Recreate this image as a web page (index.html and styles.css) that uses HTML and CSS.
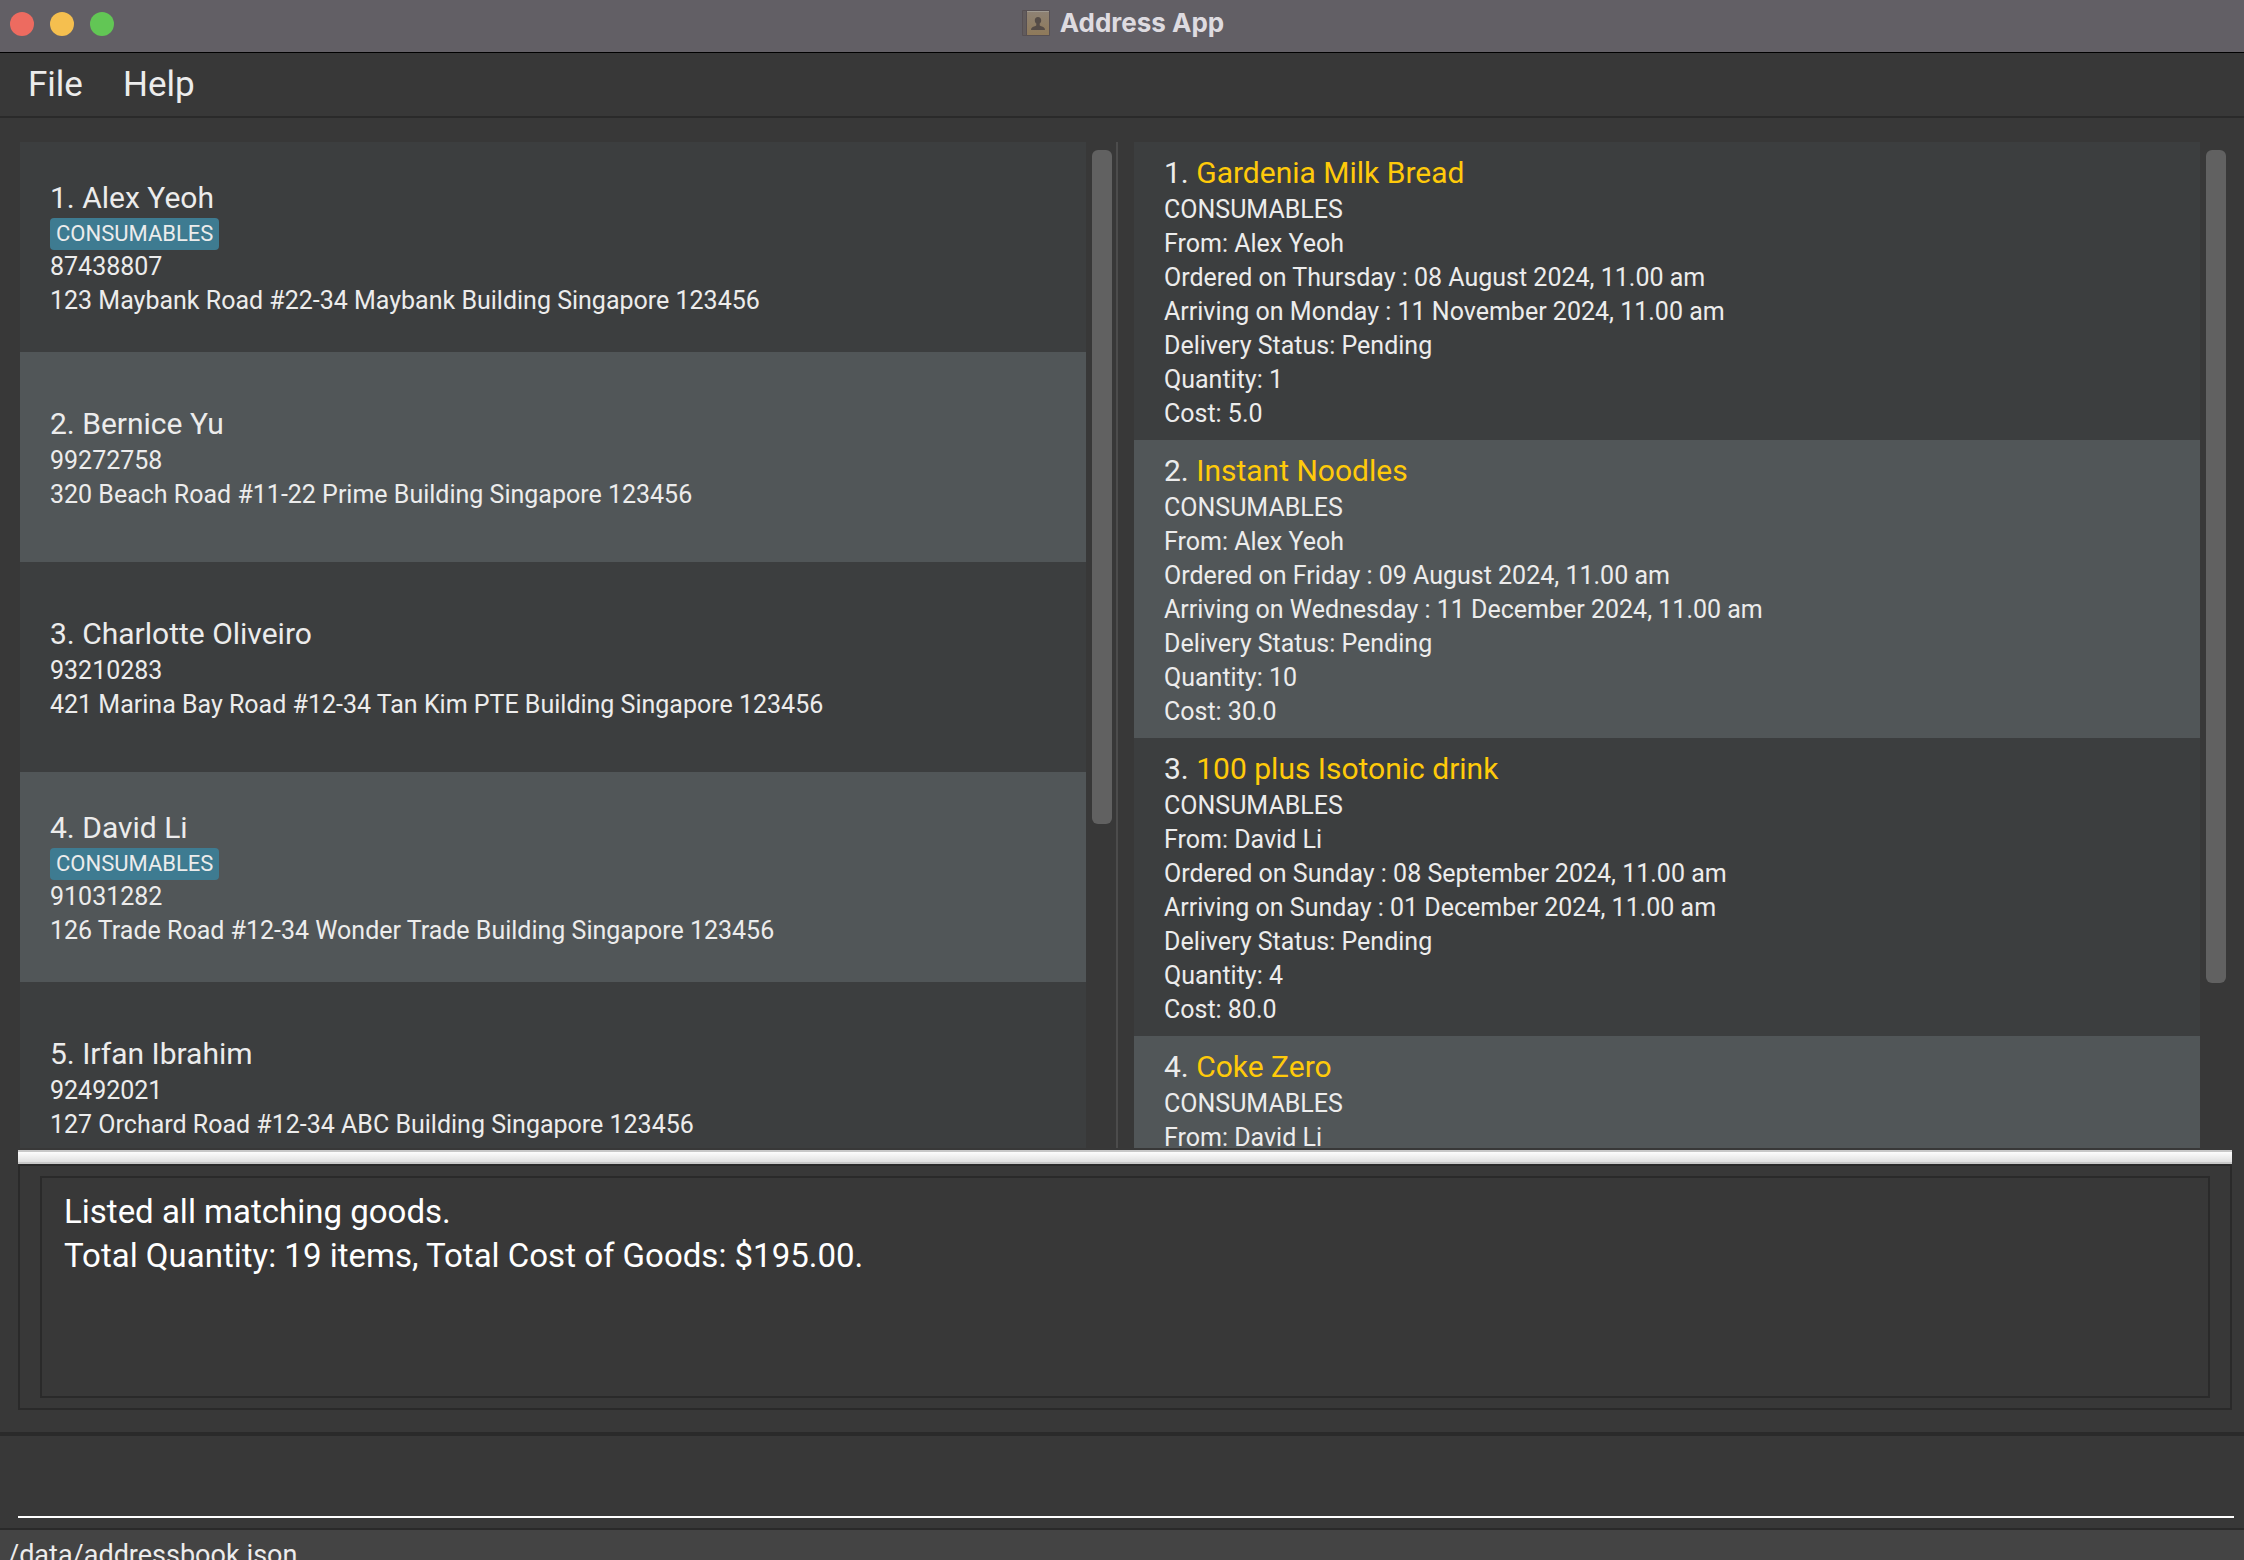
FILE: index.html
```html
<!DOCTYPE html>
<html lang="en">
<head>
<meta charset="utf-8">
<title>Address App</title>
<link rel="stylesheet" href="styles.css">
</head>
<body>
<div class="window">
  <header class="titlebar">
    <div class="traffic">
      <button class="dot dot-close" type="button" aria-label="Close"></button>
      <button class="dot dot-minimise" type="button" aria-label="Minimise"></button>
      <button class="dot dot-zoom" type="button" aria-label="Zoom"></button>
    </div>
    <h1 class="title">
      <svg class="title-icon" viewBox="0 0 28 26" width="28" height="26" aria-hidden="true">
        <defs>
          <linearGradient id="cover" x1="0" y1="0" x2="0" y2="1">
            <stop offset="0" stop-color="#8e8274"/>
            <stop offset="1" stop-color="#8f7a5a"/>
          </linearGradient>
        </defs>
        <rect x="0" y="0" width="28" height="26" rx="1" fill="#575053"/>
        <rect x="1" y="1" width="3" height="24" fill="#625c5d"/>
        <rect x="5" y="1" width="22" height="24" fill="url(#cover)"/>
        <rect x="5" y="1" width="22" height="1" fill="#a09a90"/>
        <path d="M16 7c-2 0-3.200 1.400-3.200 3.300 0 1.500.6 2.600 1.500 3.300v1.400c0 .6-.5.900-1.500 1.200-2.200.6-3.800 1.200-3.800 3.800h14c0-2.600-1.600-3.200-3.800-3.800-1-.3-1.500-.6-1.500-1.200v-1.400c.9-.7 1.500-1.800 1.500-3.300C19.200 8.400 18 7 16 7z" fill="#554c47"/>
      </svg>
      <span>Address App</span>
    </h1>
  </header>

  <nav class="menubar">
    <button class="menu" type="button">File</button>
    <button class="menu" type="button">Help</button>
  </nav>

  <main class="content">
    <div class="split">
      <ol class="list people">
        <li class="person">
          <h2 class="name">1. Alex Yeoh</h2>
          <span class="tag">CONSUMABLES</span>
          <p>87438807</p>
          <p>123 Maybank Road #22-34 Maybank Building Singapore 123456</p>
        </li>
        <li class="person">
          <h2 class="name">2. Bernice Yu</h2>
          <p>99272758</p>
          <p>320 Beach Road #11-22 Prime Building Singapore 123456</p>
        </li>
        <li class="person">
          <h2 class="name">3. Charlotte Oliveiro</h2>
          <p>93210283</p>
          <p>421 Marina Bay Road #12-34 Tan Kim PTE Building Singapore 123456</p>
        </li>
        <li class="person">
          <h2 class="name">4. David Li</h2>
          <span class="tag">CONSUMABLES</span>
          <p>91031282</p>
          <p>126 Trade Road #12-34 Wonder Trade Building Singapore 123456</p>
        </li>
        <li class="person">
          <h2 class="name">5. Irfan Ibrahim</h2>
          <p>92492021</p>
          <p>127 Orchard Road #12-34 ABC Building Singapore 123456</p>
        </li>
      </ol>
      <div class="scrollbar"><div class="thumb" style="height: 67.5%"></div></div>
      <div class="divider"></div>
      <ol class="list goods">
        <li class="good">
          <h2 class="name">1. <span class="product">Gardenia Milk Bread</span></h2>
          <p>CONSUMABLES</p>
          <p>From: Alex Yeoh</p>
          <p>Ordered on Thursday : 08 August 2024, 11.00 am</p>
          <p>Arriving on Monday : 11 November 2024, 11.00 am</p>
          <p>Delivery Status: Pending</p>
          <p>Quantity: 1</p>
          <p>Cost: 5.0</p>
        </li>
        <li class="good">
          <h2 class="name">2. <span class="product">Instant Noodles</span></h2>
          <p>CONSUMABLES</p>
          <p>From: Alex Yeoh</p>
          <p>Ordered on Friday : 09 August 2024, 11.00 am</p>
          <p>Arriving on Wednesday : 11 December 2024, 11.00 am</p>
          <p>Delivery Status: Pending</p>
          <p>Quantity: 10</p>
          <p>Cost: 30.0</p>
        </li>
        <li class="good">
          <h2 class="name">3. <span class="product">100 plus Isotonic drink</span></h2>
          <p>CONSUMABLES</p>
          <p>From: David Li</p>
          <p>Ordered on Sunday : 08 September 2024, 11.00 am</p>
          <p>Arriving on Sunday : 01 December 2024, 11.00 am</p>
          <p>Delivery Status: Pending</p>
          <p>Quantity: 4</p>
          <p>Cost: 80.0</p>
        </li>
        <li class="good">
          <h2 class="name">4. <span class="product">Coke Zero</span></h2>
          <p>CONSUMABLES</p>
          <p>From: David Li</p>
        </li>
      </ol>
      <div class="scrollbar"><div class="thumb" style="height: 83.5%"></div></div>
    </div>
    <div class="splitter"></div>
    <div class="result">
      <textarea class="result-text" rows="5" readonly aria-label="Result">Listed all matching goods.
Total Quantity: 19 items, Total Cost of Goods: $195.00.</textarea>
    </div>
  </main>

  <form class="command">
    <input class="command-input" type="text" aria-label="Command">
  </form>
  <footer class="status">/data/addressbook.json</footer>
</div>
</body>
</html>
```
FILE: styles.css
```css
* {
  box-sizing: border-box;
}

body {
  margin: 0;
  height: 100vh;
  overflow: hidden;
  background: #383838;
  color: #ececec;
  font: 25px/34px Roboto, "Liberation Sans", sans-serif;
}

h1,
h2,
p,
ol {
  margin: 0;
  padding: 0;
  font-weight: 400;
}

button,
input,
textarea {
  font-family: inherit;
  color: inherit;
  background: none;
  border: 0;
  outline: 0;
}

/* The status bar runs past the bottom edge of the screen. */
.window {
  display: flex;
  flex-direction: column;
  height: calc(100vh + 18px);
}

.titlebar {
  flex: none;
  display: grid;
  grid-template-columns: 1fr auto 1fr;
  align-items: center;
  padding: 7px 10px 11px;
  background: #625f65;
  border-bottom: 1px solid #000;
}

.traffic {
  display: flex;
  gap: 16px;
}

.dot {
  width: 24px;
  height: 24px;
  padding: 0;
  border-radius: 50%;
}

.dot-close {
  background: #ed6b60;
}

.dot-minimise {
  background: #f5bf4f;
}

.dot-zoom {
  background: #62c655;
}

.title {
  display: flex;
  align-items: center;
  gap: 10px;
  padding: 0 0 2px 2px;
  font-family: Inter, "Liberation Sans", sans-serif;
  font-size: 26px;
  line-height: 32px;
  font-weight: 700;
  color: #dedbe0;
}

.menubar {
  flex: none;
  display: flex;
  gap: 16px;
  padding: 10px 16px 9px;
  border-bottom: 2px solid #2a2a2a;
}

.menu {
  padding: 0 12px;
  font-size: 35px;
  line-height: 44px;
}

.content {
  flex: 1;
  min-height: 0;
  display: flex;
  flex-direction: column;
  padding: 24px 12px 22px 18px;
}

.split {
  flex: 1;
  min-height: 0;
  display: grid;
  grid-template-columns: 1fr 30px 18px 1fr 32px;
  grid-template-rows: minmax(0, 1fr);
  margin: 0 0 2px 2px;
}

.list {
  overflow: hidden;
  list-style: none;
  background: #3c3e3f;
}

.person {
  display: flex;
  flex-direction: column;
  justify-content: center;
  align-items: flex-start;
  min-height: 210px;
  padding: 2px 30px 0;
}

.good {
  min-height: 298px;
  padding: 11px 30px 9px;
}

.list > :nth-child(even) {
  background: #515658;
}

.name {
  font-size: 30px;
  line-height: 40px;
}

.product {
  color: #ffca0a;
}

.tag {
  padding: 1px 6px;
  border-radius: 4px;
  background: #3e7b91;
  font-size: 22px;
  line-height: 30px;
}

.scrollbar {
  padding: 8px 0 0 6px;
}

.thumb {
  width: 20px;
  border-radius: 6px;
  background: #616161;
}

.divider {
  border-left: 2px solid #4c4c4c;
}

.splitter {
  flex: none;
  height: 14px;
  border: solid #c8c8c8;
  border-width: 2px 0;
  background: linear-gradient(#fdfdfd, #e0e0e0);
}

.result {
  flex: none;
  padding: 10px 20px;
  border: 2px solid #2a2a2a;
}

.result-text {
  display: block;
  width: 100%;
  height: 222px;
  padding: 12px 22px 0;
  border: 2px solid #2a2a2a;
  resize: none;
  overflow: hidden;
  font-size: 33px;
  line-height: 44px;
  color: #fff;
}

.command {
  flex: none;
  padding: 20px 10px 10px 18px;
  border-top: 4px solid #2a2a2a;
}

.command-input {
  display: block;
  width: 100%;
  height: 62px;
  font-size: 33px;
  border-bottom: 2px solid #fff;
}

.status {
  flex: none;
  padding: 8px 8px 6px;
  border-top: 2px solid #2a2a2a;
  background: #444;
  font-size: 27px;
}
```
